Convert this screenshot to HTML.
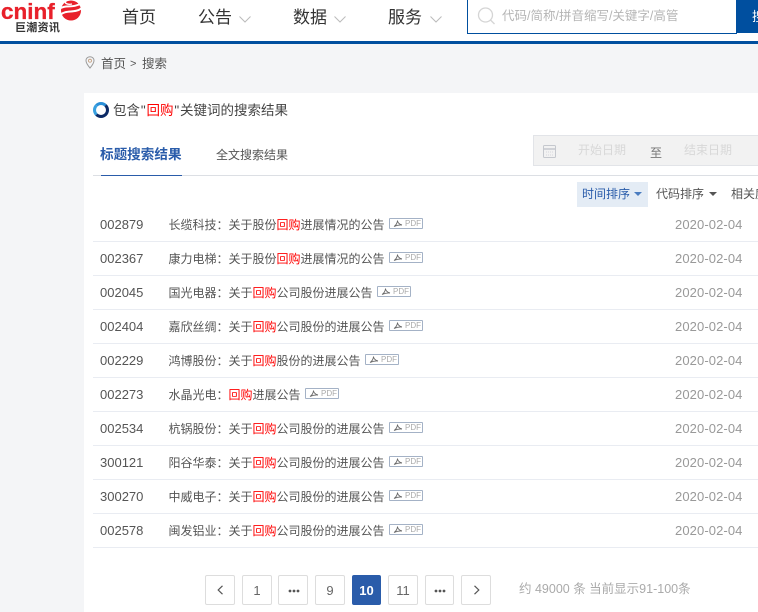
<!DOCTYPE html>
<html lang="zh"><head><meta charset="utf-8"><style>
html,body{margin:0;padding:0}
body{width:758px;height:612px;overflow:hidden;position:relative;background:#f4f5f7;font-family:"Liberation Sans","Noto Sans CJK SC",sans-serif;color:#555}
.a{position:absolute;white-space:nowrap}
.nav{font-size:17px;line-height:24px;top:6px;color:#333}
.row{position:absolute;left:93px;width:665px;height:34px;border-bottom:1px solid #e9ecf2;box-sizing:border-box}
.code{position:absolute;left:7px;top:9px;font-size:13px;line-height:16px;color:#555}
.t{position:absolute;left:75.500px;top:9px;font-size:12px;line-height:16px;color:#555;white-space:nowrap}
.t b{font-weight:normal;color:#f00}
.d{position:absolute;left:582px;top:9px;font-size:13px;line-height:16px;color:#999;letter-spacing:.1px}
.pdf{display:inline-block;vertical-align:3px;margin-left:4.500px;width:34px;height:11px;box-sizing:border-box;border:1px solid #a4b2c6;border-radius:1px;font-size:8px;line-height:9px;color:#aaa;text-align:left;position:relative;padding-left:15px;overflow:visible}
.pdf svg{position:absolute;left:3px;top:0}
.pg{position:absolute;top:575px;height:30px;box-sizing:border-box;border:1px solid #ddd;border-radius:2px;background:#fff;text-align:center;font-size:13px;line-height:29px;color:#666}
.q{display:inline-block;width:6.500px;text-align:center}
</style></head><body>
<div class="a" style="left:0;top:0;width:758px;height:41px;background:#fff"></div>
<div class="a" style="left:0;top:41px;width:758px;height:3px;background:#004f9f"></div>

<div class="a" style="left:1px;top:-1px;font:bold 22.500px/26px 'Liberation Sans',sans-serif;color:#e8202a;-webkit-text-stroke:.3px #e8202a">cninf</div>
<svg class="a" style="left:58px;top:0" width="24" height="21" viewBox="0 0 24 21"><circle cx="13" cy="10.500" r="10" fill="#e8202a"/><path d="M1 9C8 4 14 9 24 3" stroke="#fff" stroke-width="2" fill="none"/><path d="M2 15C9 9 16 14 24 8" stroke="#fff" stroke-width="2" fill="none"/><path d="M9 0C5 3 9 5 14 4" stroke="#fff" stroke-width="1.400" fill="none"/></svg>
<div class="a" style="left:15px;top:22px;font-size:11px;line-height:13px;font-weight:bold;color:#333;letter-spacing:.3px">巨潮资讯</div>

<div class="a nav" style="left:122px">首页</div>
<div class="a nav" style="left:198px">公告</div>
<div class="a nav" style="left:293px">数据</div>
<div class="a nav" style="left:388px">服务</div>
<svg class="a" style="left:239px;top:16px" width="12" height="7"><path d="M.5.5l5.500 5.500L11.500.5" fill="none" stroke="#bbb"/></svg>
<svg class="a" style="left:334px;top:16px" width="12" height="7"><path d="M.5.5l5.500 5.500L11.500.5" fill="none" stroke="#bbb"/></svg>
<svg class="a" style="left:430px;top:16px" width="12" height="7"><path d="M.5.5l5.500 5.500L11.500.5" fill="none" stroke="#bbb"/></svg>

<div class="a" style="left:467px;top:-1px;width:270px;height:35px;box-sizing:border-box;border:1px solid #004f9f;background:#fff"></div>
<svg class="a" style="left:477px;top:7px" width="20" height="19"><circle cx="8.500" cy="8" r="7" fill="none" stroke="#d5d5d5" stroke-width="1.300"/><path d="M13.500 13l4 4" stroke="#d5d5d5" stroke-width="1.300"/></svg>
<div class="a" style="left:502px;top:8px;font-size:12.500px;line-height:17px;color:#b5b5b5">代码/简称/拼音缩写/关键字/高管</div>
<div class="a" style="left:736px;top:0;width:22px;height:33px;background:#004f9f;overflow:hidden"><span style="position:absolute;left:16px;top:8px;font-size:13px;line-height:17px;color:#fff">搜索</span></div>

<svg class="a" style="left:85px;top:56px" width="10" height="13"><path d="M5 .8C2.600.8 1 2.500 1 4.600 1 7.300 5 12 5 12s4-4.700 4-7.400C9 2.500 7.400.8 5 .8z" fill="none" stroke="#9a9a9a"/><circle cx="5" cy="4.700" r="1.500" fill="none" stroke="#c09a7a" stroke-width=".8"/></svg>
<div class="a" style="left:101px;top:56px;font-size:12.500px;line-height:16px;color:#555">首页</div>
<div class="a" style="left:130px;top:56px;font-size:11px;line-height:16px;color:#555">&gt;</div>
<div class="a" style="left:142px;top:56px;font-size:12.500px;line-height:16px;color:#555">搜索</div>

<div class="a" style="left:84px;top:93px;width:674px;height:519px;background:#fff"></div>

<div class="a" style="left:93px;top:102px;width:16px;height:16px;box-sizing:border-box;border-radius:50%;border:3.500px solid;border-color:#2a8fd8 #0c2a66 #0c2a66 #38a0e0"></div>
<div class="a" style="left:113px;top:102px;font-size:13.500px;line-height:17px;color:#444">包含<span class="q">"</span><span style="color:#f00">回购</span><span class="q">"</span>关键词的搜索结果</div>

<div class="a" style="left:100px;top:146px;font-size:13.600px;line-height:18px;font-weight:bold;color:#2a5caa">标题搜索结果</div>
<div class="a" style="left:216px;top:147px;font-size:12px;line-height:17px;color:#555">全文搜索结果</div>
<div class="a" style="left:93px;top:175px;width:665px;height:1px;background:#dcdfe4"></div>
<div class="a" style="left:101px;top:175px;width:81px;height:1px;background:#2a5caa"></div>

<div class="a" style="left:533px;top:135px;width:225px;height:31px;box-sizing:border-box;border:1px solid #e2e4e8;border-right:0;background:#f2f2f2"></div>
<svg class="a" style="left:543px;top:144px" width="14" height="15"><rect x=".5" y="1.500" width="12" height="12" rx="1" fill="none" stroke="#c5c8ce"/><path d="M1 5h11" stroke="#c5c8ce" stroke-width="1.500"/><path d="M3 8h7M3 11h7" stroke="#d5d7dc" stroke-dasharray="1 1"/></svg>
<div class="a" style="left:578px;top:142px;font-size:12px;line-height:17px;color:#d8d8d8">开始日期</div>
<div class="a" style="left:650px;top:145px;font-size:12px;line-height:17px;color:#777">至</div>
<div class="a" style="left:684px;top:142px;font-size:12px;line-height:17px;color:#d8d8d8">结束日期</div>

<div class="a" style="left:577px;top:182px;width:71px;height:25px;background:#e4ecf5"></div>
<div class="a" style="left:582px;top:186px;font-size:12px;line-height:17px;color:#2a5caa">时间排序</div>
<div class="a" style="left:634px;top:192px;width:0;height:0;border:4px solid transparent;border-top:4px solid #4a7cc0;border-bottom:0"></div>
<div class="a" style="left:656px;top:186px;font-size:12px;line-height:17px;color:#555">代码排序</div>
<div class="a" style="left:709px;top:192px;width:0;height:0;border:4px solid transparent;border-top:4px solid #555;border-bottom:0"></div>
<div class="a" style="left:731px;top:186px;font-size:12px;line-height:17px;color:#555">相关度</div>

<div class="row" style="top:208px"><span class="code">002879</span><span class="t">长缆科技：关于股份<b>回购</b>进展情况的公告<span class="pdf"><svg width="10" height="9"><path d="M1 7.500C3 6.500 4.500 3.500 4.500 1.500c0 2 2 4 4.500 4.500-2-.2-5 .2-8 1.500z" fill="none" stroke="#666" stroke-width=".9"/></svg>PDF</span></span><span class="d">2020-02-04</span></div>
<div class="row" style="top:242px"><span class="code">002367</span><span class="t">康力电梯：关于股份<b>回购</b>进展情况的公告<span class="pdf"><svg width="10" height="9"><path d="M1 7.500C3 6.500 4.500 3.500 4.500 1.500c0 2 2 4 4.500 4.500-2-.2-5 .2-8 1.500z" fill="none" stroke="#666" stroke-width=".9"/></svg>PDF</span></span><span class="d">2020-02-04</span></div>
<div class="row" style="top:276px"><span class="code">002045</span><span class="t">国光电器：关于<b>回购</b>公司股份进展公告<span class="pdf"><svg width="10" height="9"><path d="M1 7.500C3 6.500 4.500 3.500 4.500 1.500c0 2 2 4 4.500 4.500-2-.2-5 .2-8 1.500z" fill="none" stroke="#666" stroke-width=".9"/></svg>PDF</span></span><span class="d">2020-02-04</span></div>
<div class="row" style="top:310px"><span class="code">002404</span><span class="t">嘉欣丝绸：关于<b>回购</b>公司股份的进展公告<span class="pdf"><svg width="10" height="9"><path d="M1 7.500C3 6.500 4.500 3.500 4.500 1.500c0 2 2 4 4.500 4.500-2-.2-5 .2-8 1.500z" fill="none" stroke="#666" stroke-width=".9"/></svg>PDF</span></span><span class="d">2020-02-04</span></div>
<div class="row" style="top:344px"><span class="code">002229</span><span class="t">鸿博股份：关于<b>回购</b>股份的进展公告<span class="pdf"><svg width="10" height="9"><path d="M1 7.500C3 6.500 4.500 3.500 4.500 1.500c0 2 2 4 4.500 4.500-2-.2-5 .2-8 1.500z" fill="none" stroke="#666" stroke-width=".9"/></svg>PDF</span></span><span class="d">2020-02-04</span></div>
<div class="row" style="top:378px"><span class="code">002273</span><span class="t">水晶光电：<b>回购</b>进展公告<span class="pdf"><svg width="10" height="9"><path d="M1 7.500C3 6.500 4.500 3.500 4.500 1.500c0 2 2 4 4.500 4.500-2-.2-5 .2-8 1.500z" fill="none" stroke="#666" stroke-width=".9"/></svg>PDF</span></span><span class="d">2020-02-04</span></div>
<div class="row" style="top:412px"><span class="code">002534</span><span class="t">杭锅股份：关于<b>回购</b>公司股份的进展公告<span class="pdf"><svg width="10" height="9"><path d="M1 7.500C3 6.500 4.500 3.500 4.500 1.500c0 2 2 4 4.500 4.500-2-.2-5 .2-8 1.500z" fill="none" stroke="#666" stroke-width=".9"/></svg>PDF</span></span><span class="d">2020-02-04</span></div>
<div class="row" style="top:446px"><span class="code">300121</span><span class="t">阳谷华泰：关于<b>回购</b>公司股份的进展公告<span class="pdf"><svg width="10" height="9"><path d="M1 7.500C3 6.500 4.500 3.500 4.500 1.500c0 2 2 4 4.500 4.500-2-.2-5 .2-8 1.500z" fill="none" stroke="#666" stroke-width=".9"/></svg>PDF</span></span><span class="d">2020-02-04</span></div>
<div class="row" style="top:480px"><span class="code">300270</span><span class="t">中威电子：关于<b>回购</b>公司股份的进展公告<span class="pdf"><svg width="10" height="9"><path d="M1 7.500C3 6.500 4.500 3.500 4.500 1.500c0 2 2 4 4.500 4.500-2-.2-5 .2-8 1.500z" fill="none" stroke="#666" stroke-width=".9"/></svg>PDF</span></span><span class="d">2020-02-04</span></div>
<div class="row" style="top:514px"><span class="code">002578</span><span class="t">闽发铝业：关于<b>回购</b>公司股份的进展公告<span class="pdf"><svg width="10" height="9"><path d="M1 7.500C3 6.500 4.500 3.500 4.500 1.500c0 2 2 4 4.500 4.500-2-.2-5 .2-8 1.500z" fill="none" stroke="#666" stroke-width=".9"/></svg>PDF</span></span><span class="d">2020-02-04</span></div>

<div class="pg" style="left:205px;width:30px"><svg width="7" height="10" style="position:absolute;left:11px;top:9px"><path d="M5.500 .8L1.200 5l4.300 4.200" fill="none" stroke="#555" stroke-width="1.200"/></svg></div>
<div class="pg" style="left:242px;width:30px">1</div>
<div class="pg" style="left:278px;width:30px"><svg width="12" height="4" style="position:absolute;left:9px;top:13px"><circle cx="2" cy="2" r="1.400" fill="#555"/><circle cx="6" cy="2" r="1.400" fill="#555"/><circle cx="10" cy="2" r="1.400" fill="#555"/></svg></div>
<div class="pg" style="left:315px;width:30px">9</div>
<div class="pg" style="left:352px;width:29px;background:#2a5caa;border-color:#2a5caa;color:#fff;font-weight:bold">10</div>
<div class="pg" style="left:388px;width:30px">11</div>
<div class="pg" style="left:425px;width:29px"><svg width="12" height="4" style="position:absolute;left:8px;top:13px"><circle cx="2" cy="2" r="1.400" fill="#555"/><circle cx="6" cy="2" r="1.400" fill="#555"/><circle cx="10" cy="2" r="1.400" fill="#555"/></svg></div>
<div class="pg" style="left:461px;width:30px"><svg width="7" height="10" style="position:absolute;left:11px;top:9px"><path d="M1.500 .8L5.800 5 1.500 9.200" fill="none" stroke="#555" stroke-width="1.200"/></svg></div>
<div class="a" style="left:519px;top:581px;font-size:12.500px;line-height:17px;color:#aaa">约 49000 条 当前显示91-100条</div>
</body></html>
